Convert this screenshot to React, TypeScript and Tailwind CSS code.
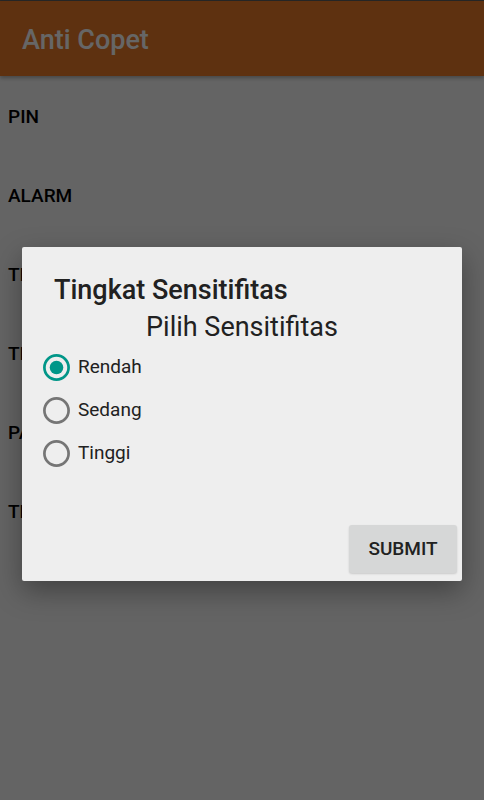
import { useState } from 'react';

const menuItems = ['PIN', 'ALARM', 'TINGKAT SENSITIFITAS', 'TIMER', 'PASSWORD', 'TENTANG'];
const levels = ['Rendah', 'Sedang', 'Tinggi'];

function Radio({ checked }: { checked: boolean }) {
  return (
    <svg width="27" height="27" viewBox="0 0 27 27" className="shrink-0">
      <circle cx="13.5" cy="13.5" r="12.1" fill="none" stroke={checked ? '#009688' : '#757575'} strokeWidth="2.7" />
      {checked && <circle cx="13.5" cy="13.5" r="6.8" fill="#009688" />}
    </svg>
  );
}

export default function App() {
  const [level, setLevel] = useState('Rendah');

  return (
    <div className="relative w-[484px] h-[800px] overflow-hidden bg-[#fafafa] font-['Roboto',sans-serif]">
      <div className="h-px bg-[#616161]" />
      <div className="h-[75px] flex items-center px-[22px] bg-[#eb7a28] shadow-[0_2px_4px_rgba(0,0,0,0.3)]">
        <span className="mt-[3px] text-[27px] font-medium text-white">Anti Copet</span>
      </div>

      <div className="pt-[2px] flex flex-col">
        {menuItems.map((item) => (
          <div key={item} className="h-[79px] flex items-center px-2 text-[19px] font-medium text-black">
            {item}
          </div>
        ))}
      </div>

      <div className="absolute inset-0 bg-black/60 flex flex-col px-[22px] pt-[247px]">
        <div className="bg-[#eeeeee] rounded-[2px] shadow-[0_10px_28px_rgba(0,0,0,0.35)] flex flex-col">
          <div className="pt-[27px] pl-8 text-[27px] leading-8 font-medium text-[#212121]">
            Tingkat Sensitifitas
          </div>
          <div className="mt-[5px] text-center text-[27px] leading-8 text-[#212121]">Pilih Sensitifitas</div>
          <div className="mt-[3px] flex flex-col pl-[21px]">
            {levels.map((l) => (
              <button
                key={l}
                onClick={() => setLevel(l)}
                className="h-[43px] flex items-center gap-2 text-[19px] text-[#212121]"
              >
                <Radio checked={level === l} />
                <span>{l}</span>
              </button>
            ))}
          </div>
          <div className="mt-[50px] mb-2 mr-[5px] flex justify-end">
            <button className="w-[108px] h-12 rounded-[3px] bg-[#d6d7d7] shadow-[0_1px_2px_rgba(0,0,0,0.15)] text-[19px] font-medium text-[#212121]">
              SUBMIT
            </button>
          </div>
        </div>
      </div>
    </div>
  );
}
